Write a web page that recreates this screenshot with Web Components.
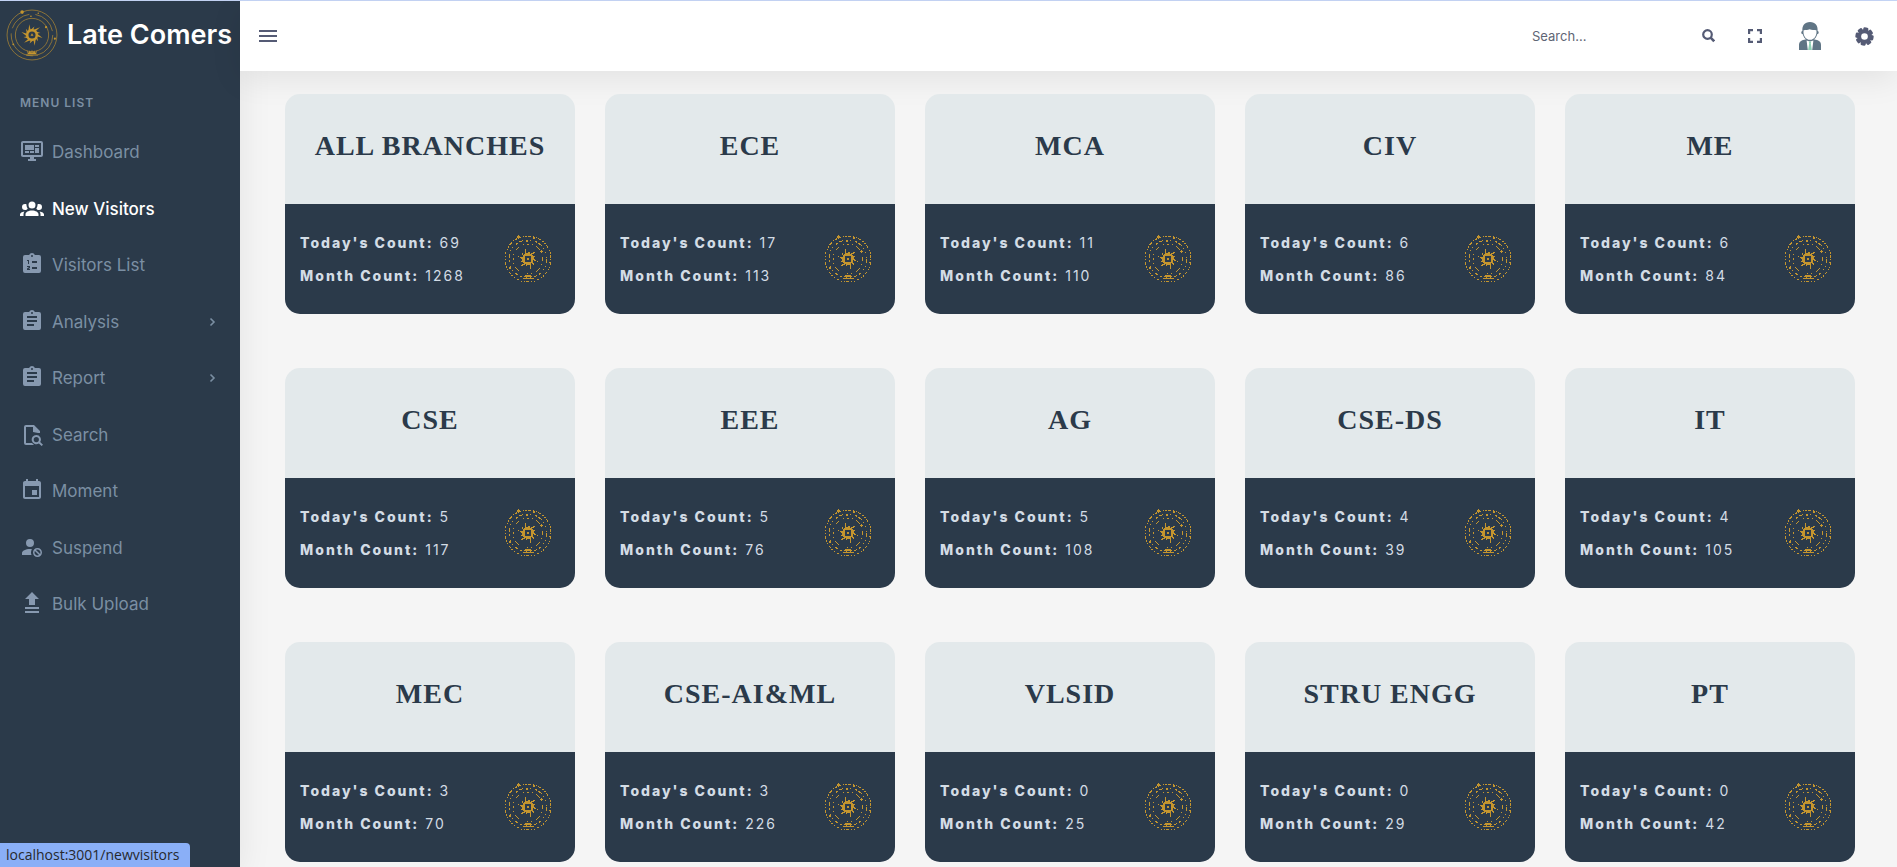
<!DOCTYPE html>
<html lang="en">
<head>
<meta charset="utf-8">
<meta name="viewport" content="width=device-width, initial-scale=1">
<title>Late Comers</title>
<style>
  body { margin: 0; font-family: Inter, "Open Sans", sans-serif; background: #f5f5f5; }
</style>
</head>
<body>
<late-app></late-app>

<template id="t-app">
  <style>
    :host {
      --navy: #2b3a4a;
      --muted: #7b8fa3;
      --ink: #555b6d;
      display: grid;
      grid-template-columns: 240px minmax(0, 1fr);
      box-sizing: border-box;
      min-height: 100vh;
      border-top: 1px solid #c7d7f8;
    }
    .content { display: flex; flex-direction: column; }
    main {
      display: grid;
      grid-template-columns: repeat(auto-fill, minmax(280px, 1fr));
      gap: 54px 30px;
      padding: 23px 42px 5px 45px;
    }
    .status {
      position: fixed; left: 0; bottom: 0;
      padding: 0 11px 0 6px;
      border-radius: 0 4px 0 0;
      background: #8aaff7; color: #26292e;
      font: 14px/24px "Open Sans", "Noto Sans", sans-serif;
    }
  </style>
  <side-nav></side-nav>
  <div class="content">
    <top-bar></top-bar>
    <main></main>
  </div>
  <div class="status">localhost:3001/newvisitors</div>
</template>

<template id="t-side">
  <style>
    :host { display: block; background: var(--navy); box-shadow: 0 8px 32px rgba(0,0,0,.08); }
    .brand {
      display: flex; align-items: center; gap: 9px;
      height: 70px; padding: 0 6px 3px; box-sizing: border-box;
      color: #fff; text-decoration: none; white-space: nowrap;
      font-size: 27px; font-weight: 600;
    }
    brand-emblem { width: 52px; height: 52px; }
    h2 {
      margin: 0; padding: 22px 20px 11px;
      font-size: 12px; line-height: 20px; font-weight: 600; letter-spacing: 1px;
      color: var(--muted);
    }
  </style>
  <a class="brand" href="#"><brand-emblem></brand-emblem><span>Late Comers</span></a>
  <nav aria-labelledby="menu">
    <h2 id="menu">MENU LIST</h2>
    <div role="list"><slot></slot></div>
  </nav>
</template>

<template id="t-item">
  <style>
    :host { display: block; height: 56px; color: var(--muted); }
    :host(:nth-child(even)) { height: 57px; }
    :host([active]) { color: #fff; }
    :host([active]) a { font-weight: 500; }
    a {
      display: flex; align-items: center; gap: 8px;
      height: 100%; padding: 0 24px 0 20px; box-sizing: border-box;
      color: inherit; text-decoration: none; font-size: 17px; line-height: 24px;
    }
    ui-icon { width: 24px; height: 24px; margin-bottom: 2px; color: #8799b0; }
    :host([active]) ui-icon { color: #fff; }
    .label { flex: 1; }
    .chev { display: none; width: 7px; height: 10px; }
    :host([expandable]) .chev { display: block; }
  </style>
  <a href="#"><ui-icon></ui-icon><span class="label"><slot></slot></span>
    <svg class="chev" viewBox="0 0 7 10" fill="none" stroke="currentColor" stroke-width="1.600"><path d="M1.500 1.500L5 5 1.500 8.500"/></svg></a>
</template>

<template id="t-top">
  <style>
    :host {
      display: flex; align-items: center; justify-content: space-between;
      height: 70px; padding: 0 23px 0 19px; box-sizing: border-box;
      background: #fff; color: var(--ink);
      box-shadow: 0 8px 32px rgba(0,0,0,.08);
    }
    button { display: flex; margin: 0; padding: 0; border: 0; background: none; color: inherit; cursor: pointer; }
    .tools, form { display: flex; align-items: center; }
    form { margin-right: 33px; }
    input {
      width: 170px; margin: 0; padding: 0; border: 0; outline: 0; background: none;
      font: 13px/20px Inter, sans-serif; color: inherit;
    }
    input::placeholder { color: #5f6575; opacity: 1; }
    .full { margin-right: 36px; }
    .user { margin-right: 33px; }
    svg { display: block; }
  </style>
  <button aria-label="Toggle menu"><svg width="18" height="14" viewBox="0 0 18 14" fill="#555b75"><path d="M0 1h18v2H0zM0 6h18v2H0zM0 11h18v2H0z"/></svg></button>
  <div class="tools">
    <form role="search">
      <input type="search" placeholder="Search..." aria-label="Search">
      <button type="button" aria-label="Run search"><svg width="13" height="14" viewBox="0 0 13 14" fill="none" stroke="#555b75"><circle cx="5.500" cy="5.500" r="4.300" stroke-width="2.200"/><path d="M8.600 8.700l3.600 3.600" stroke-width="2.600"/></svg></button>
    </form>
    <button class="full" aria-label="Full screen"><svg width="14" height="14" viewBox="0 0 14 14" fill="none" stroke="#555b75" stroke-width="2.200"><path d="M1.100 5V1.100H5M9 1.100h3.900V5M12.900 9v3.900H9M5 12.900H1.100V9"/></svg></button>
    <button class="user" aria-label="Account"><svg width="24" height="30" viewBox="0 0 24 30">
      <path fill="#607585" d="M12 1C6.600 1 4 4.600 4.400 10c-1.500.3-1.500 3 .4 3.200C5.600 17 8.600 19.600 12 19.600s6.400-2.600 7.200-6.400c1.900-.2 1.900-2.900.4-3.200C20 4.600 17.400 1 12 1z"/>
      <path fill="#607585" d="M8 18.300C3.500 19.300 1 20.500 1 24v5h22v-5c0-3.500-2.500-4.700-7-5.700z"/>
      <path fill="#fff" d="M5.600 9.200c2.400 0 4.200-.2 5.900-.9 2.300.8 4.700.9 6.900.9.800 5.300-2.200 9.600-6.400 9.600s-7.200-4.300-6.400-9.600z"/>
      <path fill="#fff" d="M8.600 19.600l1.200 9.400h4.400l1.200-9.400-3.400.8z"/>
      <path fill="#8fd0b5" d="M10.800 20.400h2.400l-.4 2.200 1.100 6.400h-3.800l1.100-6.400z"/></svg></button>
    <button aria-label="Settings"><svg width="19" height="19" viewBox="-10 -10 20 20">
      <g fill="#555b75"><g id="tooth"><rect x="-2.700" y="-9.600" width="5.400" height="19.200" rx="1.400" transform="rotate(10)"/></g>
      <rect x="-2.700" y="-9.600" width="5.400" height="19.200" rx="1.400" transform="rotate(55)"/>
      <rect x="-2.700" y="-9.600" width="5.400" height="19.200" rx="1.400" transform="rotate(100)"/>
      <rect x="-2.700" y="-9.600" width="5.400" height="19.200" rx="1.400" transform="rotate(145)"/>
      <circle r="7.300"/></g><circle r="3.500" fill="#fff"/></svg></button>
  </div>
</template>

<template id="t-card">
  <style>
    :host { display: block; }
    h3 {
      margin: 0; height: 110px; padding-bottom: 6px; box-sizing: border-box;
      display: flex; align-items: center; justify-content: center;
      border-radius: 15px 15px 0 0;
      background: #e3e9eb; color: var(--navy);
      font: bold 28px/36px "Liberation Serif", serif; letter-spacing: 1px;
    }
    .body {
      display: flex; align-items: center; justify-content: space-between;
      height: 110px; padding: 0 22px 0 15px; box-sizing: border-box;
      border-radius: 0 0 15px 15px; background: var(--navy);
    }
    p { margin: 0; font-size: 14px; line-height: 33px; letter-spacing: 2px; color: #d3dce5; white-space: nowrap; }
    b { font-weight: 800; }
    brand-emblem { width: 50px; height: 50px; }
  </style>
  <h3></h3>
  <div class="body">
    <div><p><b>Today's Count:</b> <span id="day"></span></p><p><b>Month Count:</b> <span id="month"></span></p></div>
    <brand-emblem dotted></brand-emblem>
  </div>
</template>

<script>
const tpl = (host, id) => {
  const root = host.attachShadow({ mode: "open" });
  if (id) root.append(document.getElementById(id).content.cloneNode(true));
  return root;
};

const ICONS = {
  dashboard: "M21,16V4H3V16H21M21,2A2,2 0 0,1 23,4V16A2,2 0 0,1 21,18H14V20H16V22H8V20H10V18H3C1.890,18 1,17.100 1,16V4C1,2.890 1.890,2 3,2H21M5,6H14V11H5V6M15,6H19V8H15V6M19,9V14H15V9H19M5,12H9V14H5V12M10,12H14V14H10V12Z",
  group: "M12,5.500A3.500,3.500 0 0,1 15.500,9A3.500,3.500 0 0,1 12,12.500A3.500,3.500 0 0,1 8.500,9A3.500,3.500 0 0,1 12,5.500M5,8C5.560,8 6.080,8.150 6.530,8.420C6.380,9.850 6.800,11.270 7.660,12.380C7.160,13.340 6.160,14 5,14A3,3 0 0,1 2,11A3,3 0 0,1 5,8M19,8A3,3 0 0,1 22,11A3,3 0 0,1 19,14C17.840,14 16.840,13.340 16.340,12.380C17.200,11.270 17.620,9.850 17.470,8.420C17.920,8.150 18.440,8 19,8M5.500,18.250C5.500,16.180 8.410,14.500 12,14.500C15.590,14.500 18.500,16.180 18.500,18.250V20H5.500V18.250M0,20V18.500C0,17.110 1.890,15.940 4.450,15.600C3.860,16.280 3.500,17.220 3.500,18.250V20H0M24,20H20.500V18.250C20.500,17.220 20.140,16.280 19.550,15.600C22.110,15.940 24,17.110 24,18.500V20Z",
  list: "M12,3A1,1 0 0,1 13,4A1,1 0 0,1 12,5A1,1 0 0,1 11,4A1,1 0 0,1 12,3M19,3H14.820C14.400,1.840 13.300,1 12,1C10.700,1 9.600,1.840 9.180,3H5A2,2 0 0,0 3,5V19A2,2 0 0,0 5,21H19A2,2 0 0,0 21,19V5A2,2 0 0,0 19,3M12,9H17V11H12V9M12,15H17V17H12V15M7,8H9V12H8V9H7V8M7,14H10V16L8.500,17H10V18H7V16.500L9,15H7V14Z",
  clip: "M17,9H7V7H17M17,13H7V11H17M14,17H7V15H14M12,3A1,1 0 0,1 13,4A1,1 0 0,1 12,5A1,1 0 0,1 11,4A1,1 0 0,1 12,3M19,3H14.820C14.400,1.840 13.300,1 12,1C10.700,1 9.600,1.840 9.180,3H5A2,2 0 0,0 3,5V19A2,2 0 0,0 5,21H19A2,2 0 0,0 21,19V5A2,2 0 0,0 19,3Z",
  find: "M6,3H14L20,9V11H18L13,10V5H6V21H12L14,23H6A2,2 0 0,1 4,21V5A2,2 0 0,1 6,3M16.300,13A4.600,4.600 0 0,1 20.200,20L23,22.700L21.600,24L18.900,21.400A4.600,4.600 0 1,1 16.300,13M16.300,15A2.600,2.600 0 1,0 16.300,20.200A2.600,2.600 0 1,0 16.300,15Z",
  event: "M17 12h-5v5h5v-5zM16 1v2H8V1H6v2H5c-1.110 0-1.990.9-1.990 2L3 19c0 1.100.89 2 2 2h14c1.100 0 2-.9 2-2V5c0-1.100-.9-2-2-2h-1V1h-2zm3 18H5V8h14v11z",
  cancel: "M10 4A4 4 0 0 0 6 8A4 4 0 0 0 10 12A4 4 0 0 0 14 8A4 4 0 0 0 10 4M17.500 13C15 13 13 15 13 17.500C13 20 15 22 17.500 22C20 22 22 20 22 17.500C22 15 20 13 17.500 13M10 14C5.580 14 2 15.790 2 18V20H11.500A6.500 6.500 0 0 1 11 17.500A6.500 6.500 0 0 1 11.950 14.140C11.320 14.060 10.680 14 10 14M17.500 14.500C19.160 14.500 20.500 15.840 20.500 17.500C20.500 18.060 20.350 18.580 20.080 19L16 14.920C16.420 14.650 16.940 14.500 17.500 14.500M14.920 16L19 20.080C18.580 20.350 18.060 20.500 17.500 20.500C15.840 20.500 14.500 19.160 14.500 17.500C14.500 16.940 14.650 16.420 14.920 16Z",
  upload: "M12 1L5 8h4v6h6V8h4zM5 16h14v2H5zM5 20h14v2H5z"
};

class UiIcon extends HTMLElement {
  static observedAttributes = ["name"];
  constructor() { super(); tpl(this); }
  attributeChangedCallback() {
    this.shadowRoot.innerHTML = `<style>:host{display:block}svg{display:block;width:100%;height:100%}</style>
      <svg viewBox="0 0 24 24" fill="currentColor" fill-rule="evenodd" aria-hidden="true"><path d="${ICONS[this.getAttribute("name")]}"/></svg>`;
  }
}

// Gold orbit emblem: three rings, a swirling sun and a small lotus at the foot.
class BrandEmblem extends HTMLElement {
  connectedCallback() {
    const root = this.shadowRoot || tpl(this);
    const dotted = this.hasAttribute("dotted");
    let rays = "";
    for (let i = 0; i < 12; i++) {
      const a = i * Math.PI / 6, len = i % 2 ? 8.4 : 10.6;
      const p = (r, t) => (25 + r * Math.cos(t)).toFixed(2) + " " + (25 + r * Math.sin(t)).toFixed(2);
      rays += `M${p(5, a - .3)}L${p(len, a + .28)}L${p(5, a + .24)}Z`;
    }
    const rings = dotted
      ? `<g fill="none" stroke-width="1" shape-rendering="crispEdges">
          <circle cx="25" cy="25" r="23" stroke-dasharray="1.500 1.500 3 2 1 1.500"/>
          <circle cx="25" cy="25" r="19" stroke-dasharray="4 3 1 3 1 4 2 2"/>
          <circle cx="25" cy="25" r="15" stroke-dasharray="2 3 1 4 5 4 1 3"/></g>`
      : `<g fill="none" stroke-width=".8" opacity=".75">
          <circle cx="25" cy="25" r="24"/>
          <circle cx="25" cy="25" r="20" stroke-dasharray="26 4 34 5 22 6 24 4.700"/>
          <circle cx="25" cy="25" r="16"/></g>`;
    root.innerHTML = `<style>:host{display:block;flex:none}svg{display:block;width:100%;height:100%}</style>
      <svg viewBox="0 0 50 50" fill="#c4952f" stroke="#c4952f" stroke-width="0" aria-hidden="true">${rings}
        <g ${dotted ? 'shape-rendering="crispEdges"' : ""}>
        <path d="${rays}"/>
        <circle cx="25" cy="25" r="4.600" fill="none" stroke-width="2.400"/>
        <path d="M25 23.200l1.400 2.600h-2.800z"/>
        <circle cx="15.500" cy="3" r="1.700"/><circle cx="38.500" cy="17.500" r="1.100"/><circle cx="47" cy="28.500" r="1"/><circle cx="7" cy="34" r=".9"/><circle cx="24" cy="7" r=".8"/><circle cx="31" cy="4" r=".7"/>
        <path d="M20.500 40l1.500 2.400.8-2.600 1.400 2.400.8-3.200.8 3.200 1.400-2.400.8 2.600 1.500-2.400-.4 3.200h-8.200zM19.500 43.800h11v1h-11z"/></g>
      </svg>`;
  }
}

class NavItem extends HTMLElement {
  constructor() { super(); tpl(this, "t-item"); }
  connectedCallback() {
    this.setAttribute("role", "listitem");
    this.shadowRoot.querySelector("ui-icon").setAttribute("name", this.getAttribute("icon"));
  }
}
class SideNav extends HTMLElement {
  constructor() { super(); tpl(this, "t-side"); }
  connectedCallback() {
    this.innerHTML = [
      ["dashboard", "Dashboard"], ["group", "New Visitors", "active"], ["list", "Visitors List"],
      ["clip", "Analysis", "expandable"], ["clip", "Report", "expandable"], ["find", "Search"],
      ["event", "Moment"], ["cancel", "Suspend"], ["upload", "Bulk Upload"]
    ].map(([icon, text, flag = ""]) => `<nav-item icon="${icon}" ${flag}>${text}</nav-item>`).join("");
  }
}
class TopBar extends HTMLElement { constructor() { super(); tpl(this, "t-top"); } }

class BranchCard extends HTMLElement {
  constructor() { super(); tpl(this, "t-card"); }
  set data([name, day, month]) {
    const $ = s => this.shadowRoot.querySelector(s);
    $("h3").textContent = name;
    $("#day").textContent = day;
    $("#month").textContent = month;
  }
}
class LateApp extends HTMLElement {
  constructor() { super(); tpl(this, "t-app"); }
  connectedCallback() {
    const main = this.shadowRoot.querySelector("main");
    [["ALL BRANCHES", 69, 1268], ["ECE", 17, 113], ["MCA", 11, 110], ["CIV", 6, 86], ["ME", 6, 84],
     ["CSE", 5, 117], ["EEE", 5, 76], ["AG", 5, 108], ["CSE-DS", 4, 39], ["IT", 4, 105],
     ["MEC", 3, 70], ["CSE-AI&ML", 3, 226], ["VLSID", 0, 25], ["STRU ENGG", 0, 29], ["PT", 0, 42]
    ].forEach(d => {
      const card = document.createElement("branch-card");
      card.data = d;
      main.append(card);
    });
  }
}
customElements.define("ui-icon", UiIcon);
customElements.define("brand-emblem", BrandEmblem);
customElements.define("nav-item", NavItem);
customElements.define("side-nav", SideNav);
customElements.define("top-bar", TopBar);
customElements.define("branch-card", BranchCard);
customElements.define("late-app", LateApp);
</script>
</body>
</html>
